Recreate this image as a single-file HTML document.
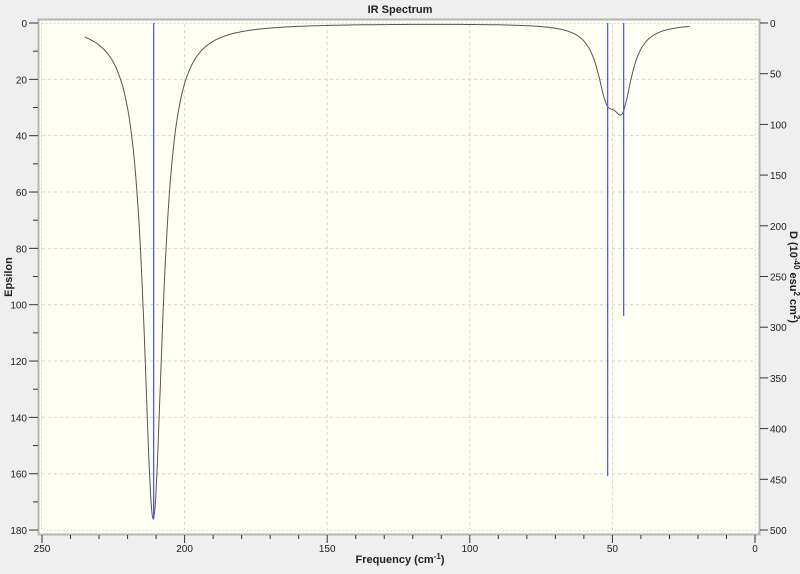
<!DOCTYPE html><html><head><style>body{margin:0;background:#f0f0f0;width:800px;height:569px;overflow:hidden;font-family:"Liberation Sans",sans-serif}</style></head><body>
<svg id="s" width="800" height="569" xmlns="http://www.w3.org/2000/svg" font-family="Liberation Sans, sans-serif" font-size="10" fill="#222">
<rect x="0" y="0" width="800" height="569" fill="#efefef"/>
<rect x="38.5" y="19.5" width="721" height="515" fill="#fffff4" stroke="#b4b4b4" stroke-width="2"/>
<rect x="41.5" y="23.5" width="714" height="507" fill="none" stroke="#d8d8d8" stroke-dasharray="2,2"/>
<g id="grid" stroke="#d4d4d4" stroke-dasharray="3,3"></g>
<g id="ticks" stroke="#333"></g>
<g id="lbl"></g>
<text x="400" y="13" text-anchor="middle" font-weight="bold" font-size="11">IR Spectrum</text>
<text x="400" y="563" text-anchor="middle" font-weight="bold" font-size="11">Frequency (cm<tspan dy="-4" font-size="8">-1</tspan><tspan dy="4">)</tspan></text>
<text transform="translate(12,277) rotate(-90)" text-anchor="middle" font-weight="bold" font-size="11">Epsilon</text>
<text transform="translate(790,277) rotate(90)" text-anchor="middle" font-weight="bold" font-size="11">D (10<tspan dy="-4" font-size="8">-40</tspan><tspan dy="4"> esu</tspan><tspan dy="-4" font-size="8">2</tspan><tspan dy="4"> cm</tspan><tspan dy="-4" font-size="8">2</tspan><tspan dy="4">)</tspan></text>
<path id="c" fill="none" stroke="#555" stroke-width="1"/>
<rect x="153" y="23" width="1.3" height="496" fill="#4a5cff"/>
<rect x="607" y="23" width="1.3" height="453" fill="#4a5cff"/>
<rect x="623" y="23" width="1.3" height="293" fill="#4a5cff"/>
</svg>
<script>
var X=function(f){return 42+(250-f)*2.852},Y=function(e){return 23+e*2.817};
var ns="http://www.w3.org/2000/svg";
function el(p,t,a,txt){var e=document.createElementNS(ns,t);for(var k in a)e.setAttribute(k,a[k]);if(txt!=null)e.textContent=txt;document.getElementById(p).appendChild(e);}
[200,150,100,50].forEach(function(f){el("grid","line",{x1:X(f),x2:X(f),y1:24,y2:530});});
for(var e=20;e<=160;e+=20)el("grid","line",{x1:42,x2:755,y1:Y(e),y2:Y(e)});
for(var f=250;f>=0;f-=10){var x=X(f);el("ticks","line",{x1:x,x2:x,y1:535,y2:f%50==0?543:539});if(f%50==0)el("lbl","text",{x:x,y:552,"text-anchor":"middle"},f);}
for(var e=0;e<=180;e+=10){var y=Y(e);el("ticks","line",{x1:e%20==0?29:33,x2:38,y1:y,y2:y});if(e%20==0)el("lbl","text",{x:27,y:y+4,"text-anchor":"end"},e);}
for(var d=0;d<=500;d+=50){var y=23+d*1.014;el("ticks","line",{x1:760,x2:768,y1:y,y2:y});el("lbl","text",{x:770,y:y+4},d);}
var w2=16.8,P="";
for(var f=235;f>=23;f-=0.25){var v=176*w2/((f-211)*(f-211)+w2)+20.1*w2/((f-52)*(f-52)+w2)+24.8*w2/((f-46.5)*(f-46.5)+w2);P+=(P?"L":"M")+X(f).toFixed(1)+","+Y(v).toFixed(1);}
document.getElementById("c").setAttribute("d",P);
</script>
</body></html>
